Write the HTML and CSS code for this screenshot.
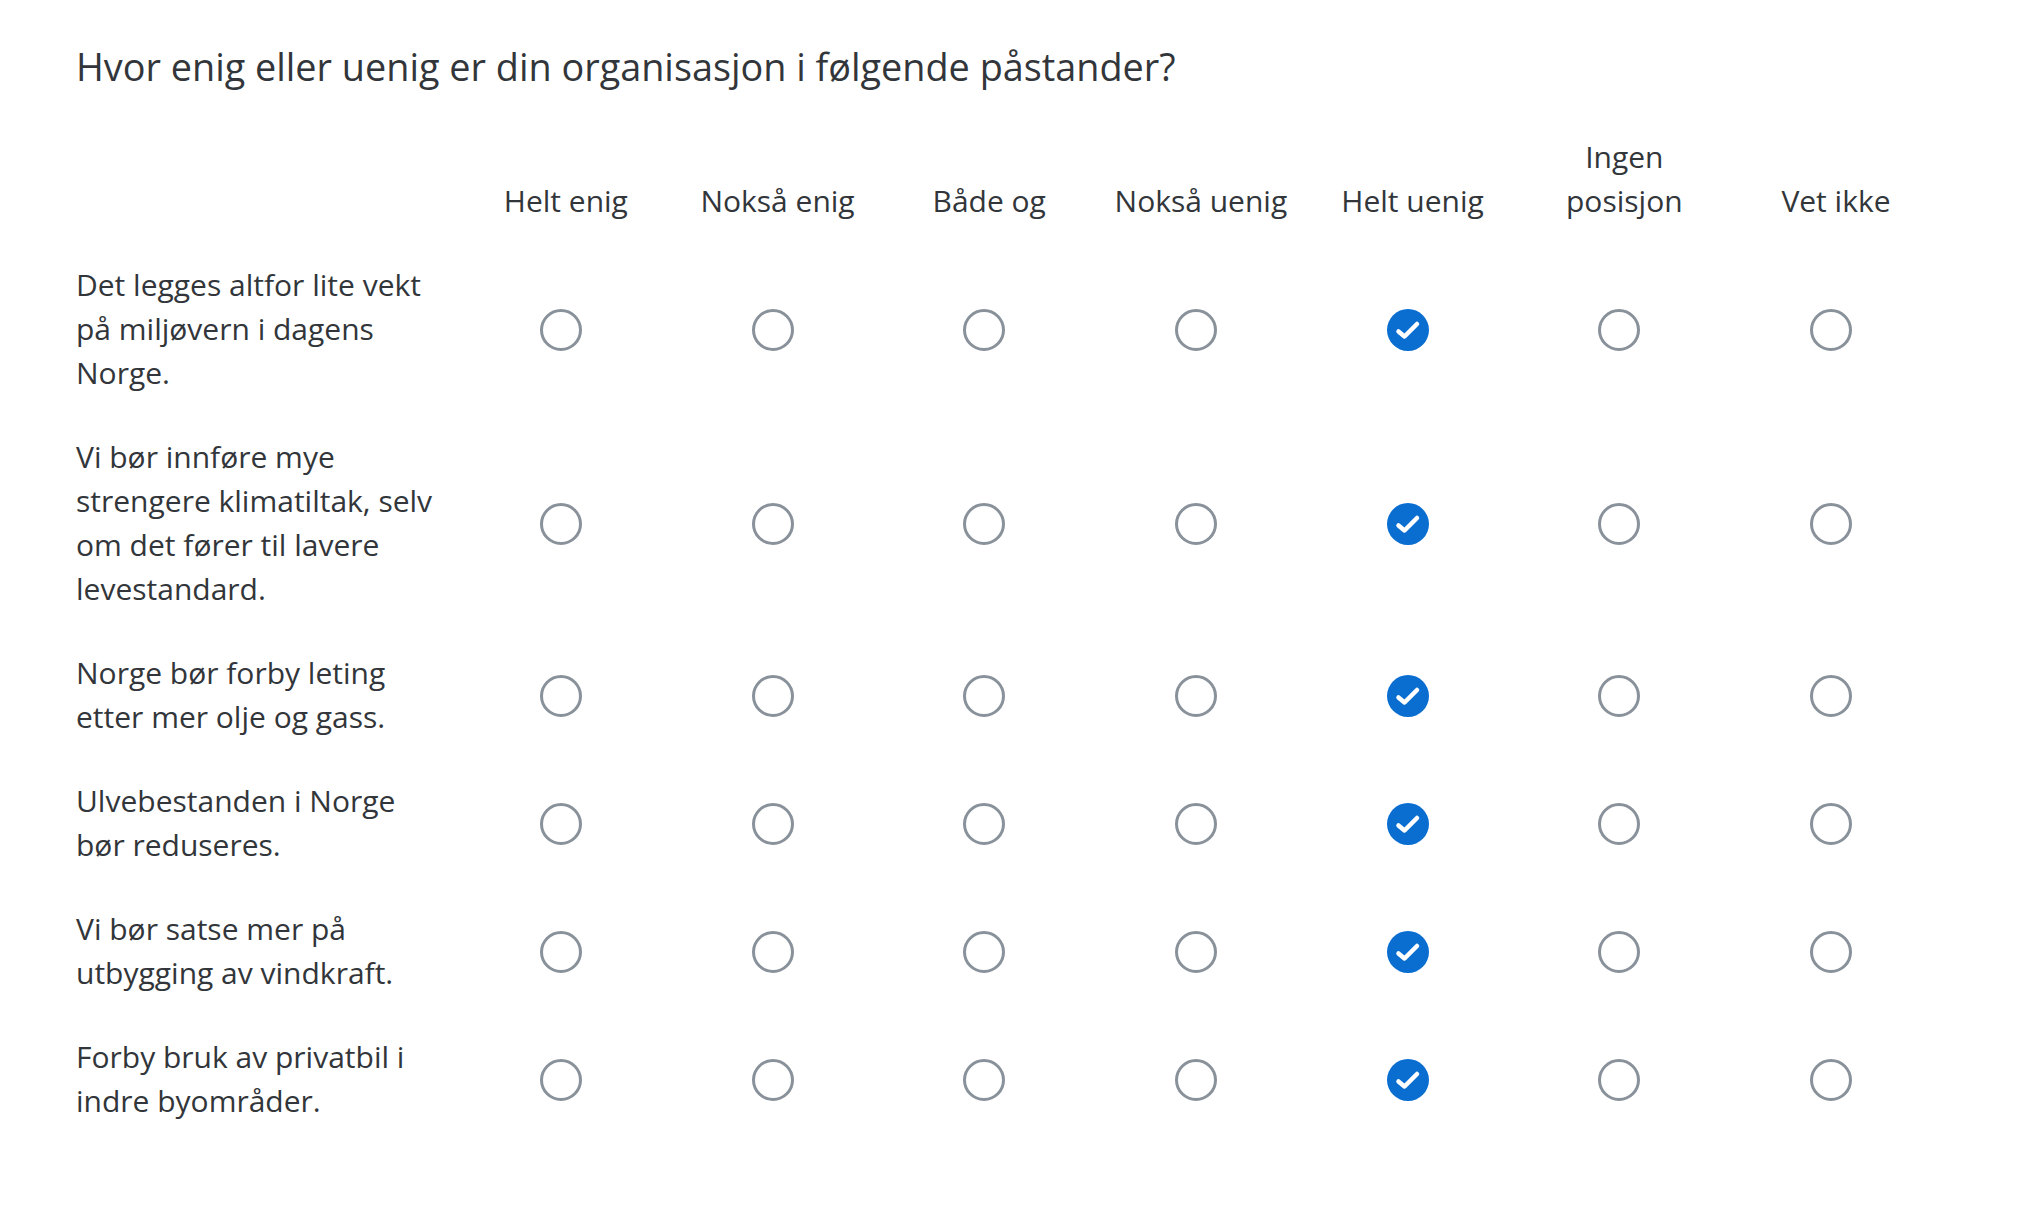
FILE: index.html
```html
<!DOCTYPE html>
<html lang="no">
<head>
<meta charset="utf-8">
<title>Matrise</title>
<link rel="stylesheet" href="styles.css">
</head>
<body>
<main class="question">
  <h1 class="q-title">Hvor enig eller uenig er din organisasjon i følgende påstander?</h1>
  <div class="matrix">
    <div class="hcell hlabel"></div>
    <div class="hcell">Helt enig</div>
    <div class="hcell">Nokså enig</div>
    <div class="hcell">Både og</div>
    <div class="hcell">Nokså uenig</div>
    <div class="hcell">Helt uenig</div>
    <div class="hcell">Ingen<br>posisjon</div>
    <div class="hcell">Vet ikke</div>

    <div class="rlabel">Det legges altfor lite vekt på miljøvern i dagens Norge.</div>
    <div class="rcell"><span class="radio"></span></div>
    <div class="rcell"><span class="radio"></span></div>
    <div class="rcell"><span class="radio"></span></div>
    <div class="rcell"><span class="radio"></span></div>
    <div class="rcell"><span class="radio checked"><svg viewBox="0 0 42 42"><path d="M11.5 22.5 L17.5 27.5 L30 15"/></svg></span></div>
    <div class="rcell"><span class="radio"></span></div>
    <div class="rcell"><span class="radio"></span></div>

    <div class="rlabel">Vi bør innføre mye strengere klimatiltak, selv om det fører til lavere levestandard.</div>
    <div class="rcell"><span class="radio"></span></div>
    <div class="rcell"><span class="radio"></span></div>
    <div class="rcell"><span class="radio"></span></div>
    <div class="rcell"><span class="radio"></span></div>
    <div class="rcell"><span class="radio checked"><svg viewBox="0 0 42 42"><path d="M11.5 22.5 L17.5 27.5 L30 15"/></svg></span></div>
    <div class="rcell"><span class="radio"></span></div>
    <div class="rcell"><span class="radio"></span></div>

    <div class="rlabel">Norge bør forby leting etter mer olje og gass.</div>
    <div class="rcell"><span class="radio"></span></div>
    <div class="rcell"><span class="radio"></span></div>
    <div class="rcell"><span class="radio"></span></div>
    <div class="rcell"><span class="radio"></span></div>
    <div class="rcell"><span class="radio checked"><svg viewBox="0 0 42 42"><path d="M11.5 22.5 L17.5 27.5 L30 15"/></svg></span></div>
    <div class="rcell"><span class="radio"></span></div>
    <div class="rcell"><span class="radio"></span></div>

    <div class="rlabel">Ulvebestanden i Norge bør reduseres.</div>
    <div class="rcell"><span class="radio"></span></div>
    <div class="rcell"><span class="radio"></span></div>
    <div class="rcell"><span class="radio"></span></div>
    <div class="rcell"><span class="radio"></span></div>
    <div class="rcell"><span class="radio checked"><svg viewBox="0 0 42 42"><path d="M11.5 22.5 L17.5 27.5 L30 15"/></svg></span></div>
    <div class="rcell"><span class="radio"></span></div>
    <div class="rcell"><span class="radio"></span></div>

    <div class="rlabel">Vi bør satse mer på utbygging av vindkraft.</div>
    <div class="rcell"><span class="radio"></span></div>
    <div class="rcell"><span class="radio"></span></div>
    <div class="rcell"><span class="radio"></span></div>
    <div class="rcell"><span class="radio"></span></div>
    <div class="rcell"><span class="radio checked"><svg viewBox="0 0 42 42"><path d="M11.5 22.5 L17.5 27.5 L30 15"/></svg></span></div>
    <div class="rcell"><span class="radio"></span></div>
    <div class="rcell"><span class="radio"></span></div>

    <div class="rlabel">Forby bruk av privatbil i indre byområder.</div>
    <div class="rcell"><span class="radio"></span></div>
    <div class="rcell"><span class="radio"></span></div>
    <div class="rcell"><span class="radio"></span></div>
    <div class="rcell"><span class="radio"></span></div>
    <div class="rcell"><span class="radio checked"><svg viewBox="0 0 42 42"><path d="M11.5 22.5 L17.5 27.5 L30 15"/></svg></span></div>
    <div class="rcell"><span class="radio"></span></div>
    <div class="rcell"><span class="radio"></span></div>
  </div>
</main>
</body>
</html>
```
FILE: styles.css
```css
* { box-sizing: border-box; }
html, body { margin: 0; background: #fff; }
body { font-family: "Open Sans", "Liberation Sans", sans-serif; color: #32363a; }
.question { padding: 44px 0 0 76px; }
.q-title { font-size: 37.8px; font-weight: 400; line-height: 46px; margin: 0 0 25px; }
.matrix { display: grid; grid-template-columns: 384px repeat(7, 211.7px); }
.hcell { display: flex; align-items: flex-end; justify-content: center; text-align: center; font-size: 30px; line-height: 44px; padding: 20px 0; }
.hlabel { justify-content: flex-start; }
.rlabel { font-size: 30px; line-height: 44px; padding: 20px 18px 20px 0; display: flex; align-items: center; }
.rcell { display: flex; align-items: center; justify-content: center; padding: 2px 10px 0 0; }
.radio { width: 42px; height: 42px; display: block; border-radius: 50%; border: 3.5px solid #89919a; background: #fff; }
.radio.checked { border: 0; background: #0a6ed1; }
.radio svg { width: 42px; height: 42px; display: block; }
.radio svg path { fill: none; stroke: #fff; stroke-width: 4.5; stroke-linecap: round; stroke-linejoin: round; }
```
